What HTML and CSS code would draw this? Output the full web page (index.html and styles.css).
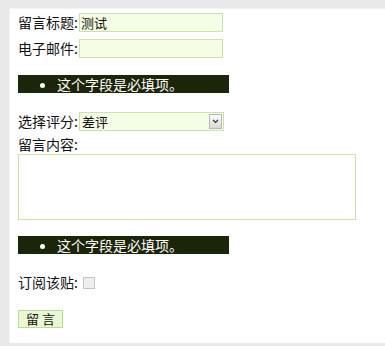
FILE: index.html
```html
<!DOCTYPE html>
<html lang="zh-CN">
<head>
    <meta charset="UTF-8">
    <meta name="viewport" content="width=device-width, initial-scale=1.0">
    <title>留言</title>
    <link rel="stylesheet" href="styles.css">
</head>
<body>
    <div id="panel">
        <form id="form-liuyan">
            <div class="fila">
                <label class="etiqueta">留言标题:</label>
                <input class="campo" type="text" value="测试">
            </div>
            <div class="fila fila-email">
                <label class="etiqueta">电子邮件:</label>
                <input class="campo" type="text">
            </div>
            <ul class="error">
                <li>这个字段是必填项。</li>
            </ul>
            <div class="fila fila-select">
                <label class="etiqueta">选择评分:</label>
                <div class="select-caja">
                    <span class="select-texto">差评</span>
                    <span class="select-boton">
                        <svg width="7" height="5" viewBox="0 0 7 5"><path d="M1 1 L3.5 3.5 L6 1" fill="none" stroke="#333" stroke-width="1.2"/></svg>
                    </span>
                </div>
            </div>
            <label class="etiqueta etiqueta-bloque">留言内容:</label>
            <textarea class="contenido"></textarea>
            <ul class="error error-2">
                <li>这个字段是必填项。</li>
            </ul>
            <div class="fila fila-check">
                <label class="etiqueta">订阅该贴:</label>
                <span class="casilla"></span>
            </div>
            <button type="button" class="boton">留 言</button>
        </form>
    </div>
</body>
</html>
```

FILE: styles.css
```css
* {
    margin: 0;
    padding: 0;
    box-sizing: border-box;
}

html, body {
    width: 385px;
    height: 346px;
    overflow: hidden;
    background-color: #e9e9e9;
    font-family: "Noto Sans CJK SC", "Noto Sans", sans-serif;
    font-size: 14px;
    color: #111;
}

#panel {
    margin: 8px 0 0 9px;
    height: 335px;
    background-color: #fff;
    border-left: 1px solid #f3f3f3;
    border-top: 1px solid #f3f3f3;
}

#form-liuyan {
    display: flex;
    flex-direction: column;
    align-items: flex-start;
    padding: 4px 0 0 8px;
}

.fila {
    display: flex;
    align-items: center;
    height: 19px;
}

.fila-email {
    margin-top: 7px;
}

.etiqueta {
    line-height: 19px;
    width: 61px;
    white-space: nowrap;
}

.campo {
    width: 144px;
    height: 19px;
    border: 1px solid #c9e5a2;
    background-color: #f6fde5;
    color: #111;
    font-family: inherit;
    font-size: 13px;
    padding: 0 1px;
    outline: none;
}

.error {
    margin-top: 17px;
    width: 211px;
    height: 18px;
    background-color: #1b2608;
    color: #fff;
    line-height: 18px;
    padding-left: 39px;
    list-style: disc;
}

.error-2 {
    margin-top: 16px;
}

.fila-select {
    margin-top: 19px;
}

.select-caja {
    position: relative;
    width: 145px;
    height: 19px;
    border: 1px solid #c9e5a2;
    background-color: #f6fde5;
    font-size: 13px;
    line-height: 17px;
    padding-left: 2px;
}

.select-boton {
    position: absolute;
    right: 1px;
    top: 1px;
    width: 13px;
    height: 15px;
    border: 1px solid #b8b8b8;
    background: linear-gradient(#fafafa, #d9d9d9);
    display: flex;
    align-items: center;
    justify-content: center;
}

.etiqueta-bloque {
    margin-top: 4px;
    line-height: 18px;
}

.contenido {
    width: 338px;
    height: 66px;
    border: 1px solid #c9e5a2;
    background-color: #fff;
    resize: none;
    outline: none;
    margin-top: 1px;
}

.fila-check {
    margin-top: 19px;
}

.fila-check .etiqueta {
    width: 65px;
}

.casilla {
    width: 12px;
    height: 12px;
    border: 1px solid #c4c4c4;
    background-color: #efefef;
}

.boton {
    margin-top: 18px;
    width: 45px;
    height: 18px;
    border: 1px solid #b9df8c;
    background-color: #eaf7d4;
    font-family: inherit;
    font-size: 13px;
    line-height: 16px;
    color: #111;
}
```
